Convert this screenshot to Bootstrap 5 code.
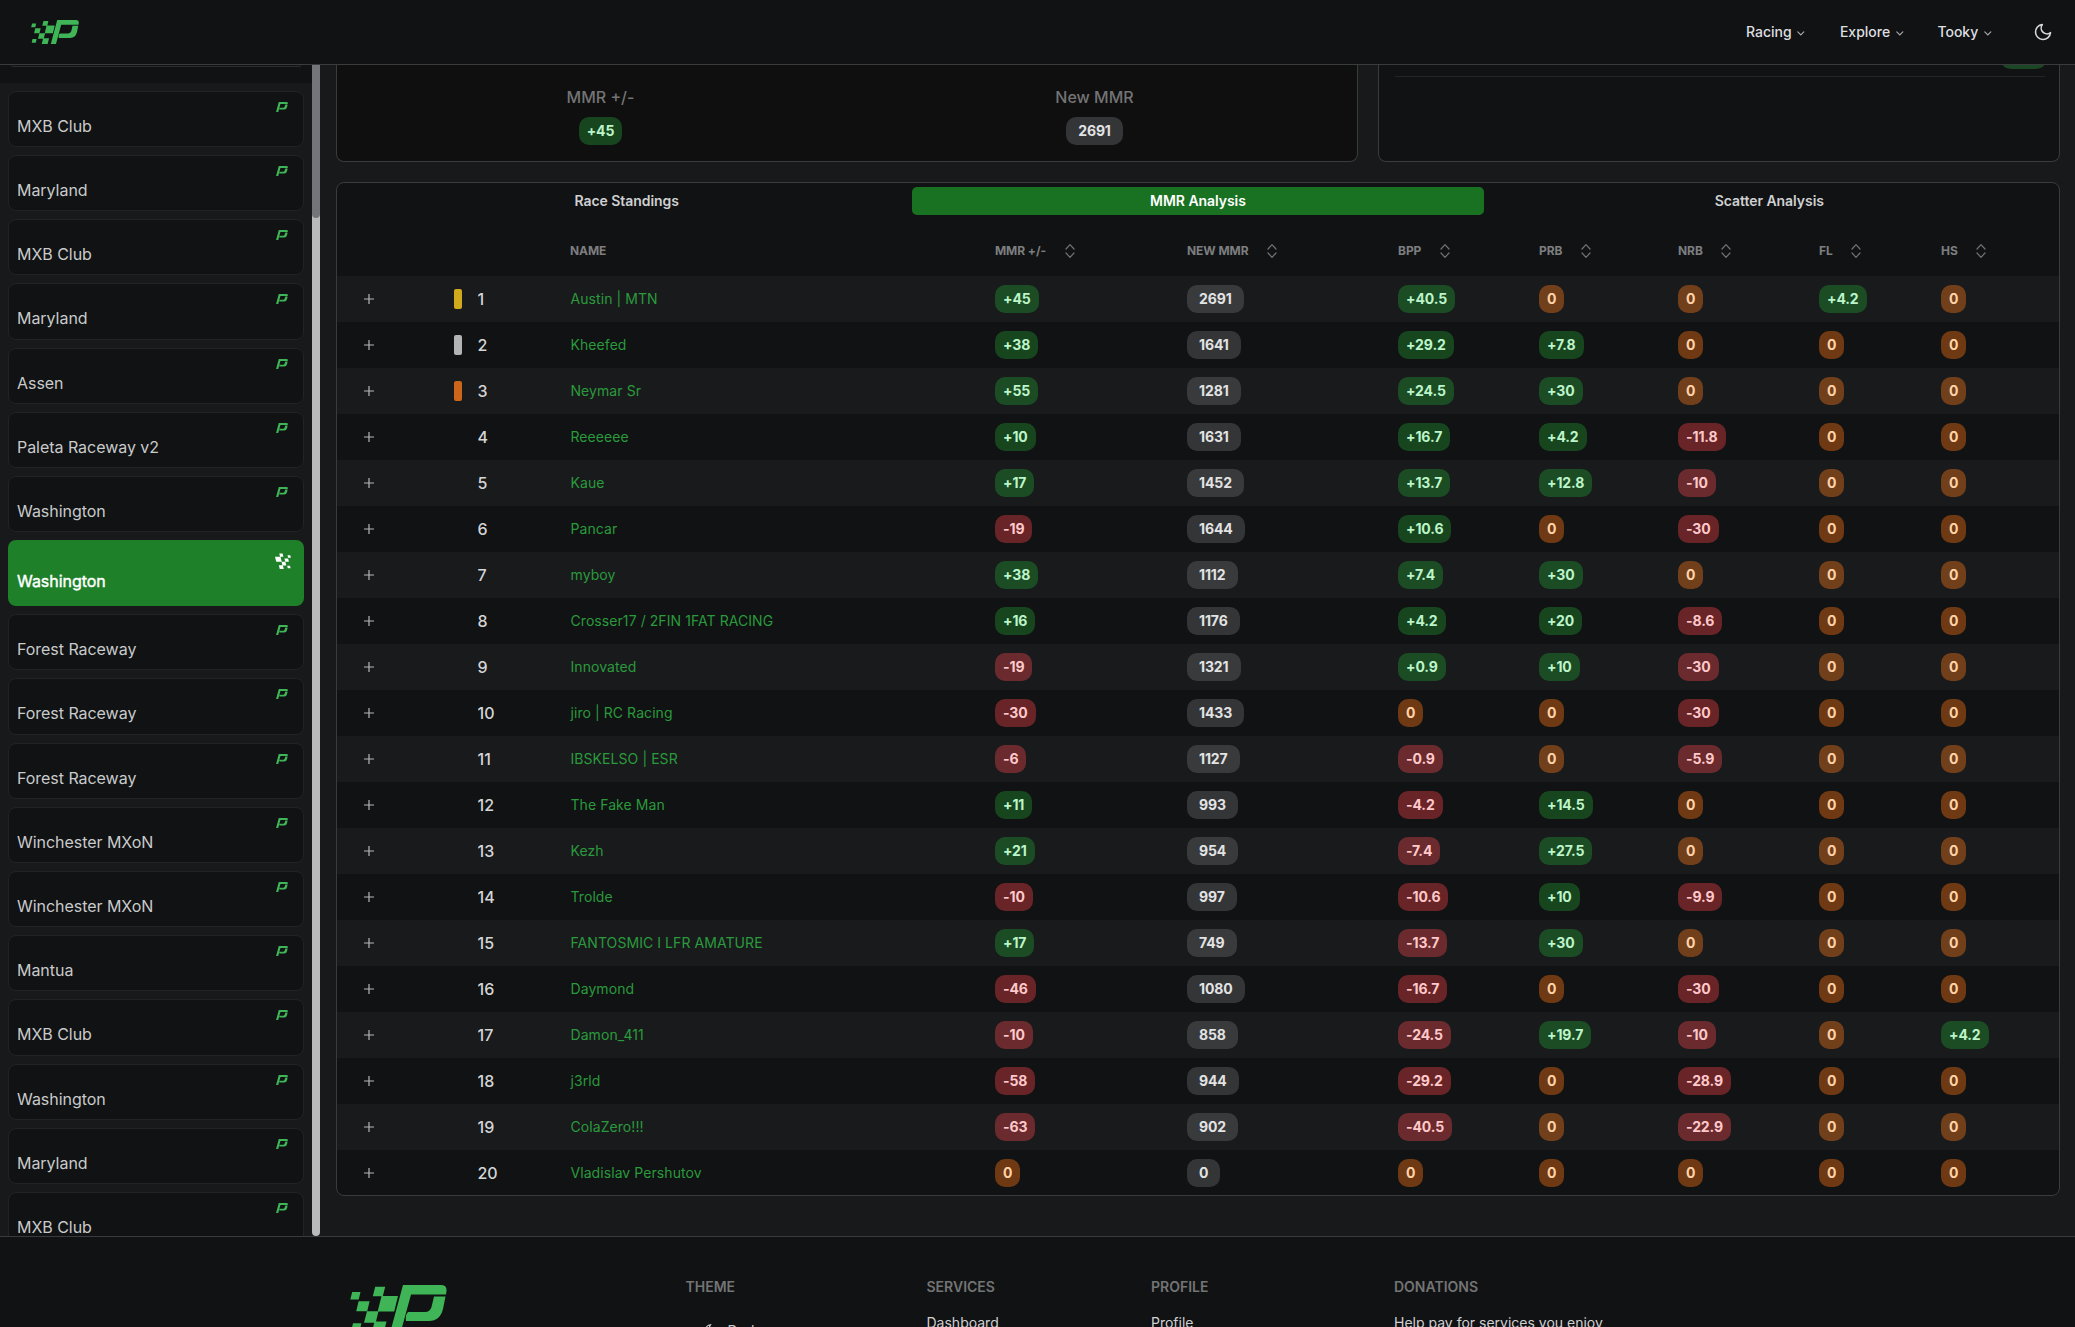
<!DOCTYPE html>
<html lang="en" data-bs-theme="dark">
<head>
<meta charset="utf-8">
<title>MMR Analysis</title>
<link rel="stylesheet" href="https://cdn.jsdelivr.net/npm/bootstrap@5.3.0/dist/css/bootstrap.min.css">
<style>
html,body{height:1327px;overflow:hidden}
body{font-family:Inter,sans-serif;background:#18191b;color:#c9cacb;font-size:14px;line-height:20px}
.topbar{height:65px;background:#111213;border-bottom:1px solid #3a3b3d;padding:0 22px 0 31px}
.topbar .nav-link{color:#dedfe0;font-weight:500;padding:0}
.topbar .nav-link svg{margin-left:2px}
.panel{background:#101213;border:1px solid #393b3d;border-radius:8px}
.green{color:#3fb557}
.shell{height:1171px}
.side{width:320px}
.side-list{width:312px;overflow:hidden}
.side-head{height:17.9px;background:#111214;padding:0 8px;flex:none}
.side-head div{height:2px;border:1px solid #2b2c2f;border-top:0;border-radius:0 0 8px 8px;margin:0 3px}
.track{height:56.2px;flex:none;background:#101213;border:1px solid #212325;border-radius:8px;position:relative;padding:22px 8px 0;font-size:16px;line-height:24px;letter-spacing:-.04px;color:#c9cacb}
.track svg{position:absolute;right:15px;top:10px}
.track.now{height:66px;background:#1e8129;border:0;color:#fff;-webkit-text-stroke:.4px #fff;padding:29px 9px 0}
.track.now svg{right:13px;top:13px}
.rail{width:8px;background:#b9babc;border-radius:0 0 4px 4px}
.rail div{height:153px;background:#74757a;border-radius:0 0 4px 4px}
.content{padding:0 15px 0 16px}
.summary{height:97px;border-top:0;border-radius:0 0 8px 8px}
.stat{margin-top:-4px;padding-left:1px}
.stat .pill{margin-top:8px}
.stat-title{font-size:16px;line-height:24px;color:#737475;font-weight:500}
.pill{display:inline-block;height:28px;line-height:28px;border-radius:10px;padding:0 8px;font-weight:700;font-size:14px;letter-spacing:-.1px;vertical-align:middle}
.pos{background:#17451e;color:#bdf5ca}
.neg{background:#692427;color:#ffc9cb}
.zer{background:#6f3913;color:#ffd3a8}
.neu{background:#343536;color:#e2e3e4;padding:0 12px}
tr:nth-child(odd) .pos{background:#1b4c24}
tr:nth-child(odd) .neg{background:#6b2b2e}
tr:nth-child(odd) .zer{background:#723f1b}
tr:nth-child(odd) .neu{background:#393a3b}
.board{height:1014px;overflow:hidden;margin-top:20px}
.tabs{padding:4px}
.tabs .nav-link{height:28px;padding:0;line-height:28px;color:#cfd0d1;font-weight:600;letter-spacing:-.05px;border-radius:5px;font-size:14px}
.tabs .nav-link.active{background:#197221;color:#fff}
.grid-t{table-layout:fixed;width:100%;border-collapse:collapse}
.grid-t th{height:57px;padding:6px 0 0;color:#7d7e80;font-size:12px;font-weight:700;letter-spacing:-.06px}
.grid-t th svg{margin-left:15.5px}
.grid-t td{height:46px;padding:0;vertical-align:middle}
.grid-t td>svg{position:relative;top:-1px}
.grid-t tbody tr:nth-child(odd){background:#191a1c}
.grid-t .who{color:#2a9a3c;letter-spacing:.07px;padding-left:.5px}
.place{font-size:16px;font-weight:500;color:#d4d5d6}
.medal{width:8px;height:20px;border-radius:2px;margin-right:15.5px}
.foot{background:#111213;border-top:1px solid #3a3b3d;height:91px;padding:40px 0 0 350px;overflow:hidden}
.foot h6{font-size:14px;line-height:20px;font-weight:600;color:#737475;margin:0 0 16px}
.foot a{color:#d0d1d2;text-decoration:none;white-space:nowrap;display:block}
</style>
<script src="https://cdn.jsdelivr.net/npm/bootstrap@5.3.0/dist/js/bootstrap.bundle.min.js"></script>
</head>
<body>
<svg width="0" height="0" class="position-absolute">
<defs>
<g id="checks"><path d="M2.200 7h8.300l-1.800 7.600h-8.400zM25.200 1.700h10l-2.400 9.500h-10zM8.600 16.300h11l-2.400 10h-11zM31.500 11h16.500l-3.800 15.500h-16.500zM17 26.300h11.500l-2.800 11.400h-11.700zM3 38.200h8.400l-1.700 7.300h-8.300zM24.500 36.500h12l-2.800 11.500h-12z"/></g>
<g id="pee"><path d="M53 0H91Q97 0 96.500 6L96 9.500H61L50.500 48H40ZM84 11.500H95.500L93 24Q90 36 79 36H56Q55 30 58 27H75Q80 27 81.500 22Z"/></g>
<g id="chev"><path d="M.8.800l3 3 3-3" fill="none" stroke="#a5a6a8" stroke-width="1.2" stroke-linecap="round"/></g>
<g id="sort"><path d="M4 6l4-4.300 4 4.300M4 10l4 4.300 4-4.300" fill="none" stroke="#717274" stroke-width="1.2" stroke-linecap="round" stroke-linejoin="round"/></g>
<g id="plus"><path d="M8 3v10M3 8h10" stroke="#b5b6b7" stroke-width="1.200"/></g>
</defs>
</svg>
<nav class="topbar d-flex align-items-center justify-content-between">
  <svg class="green" width="48" height="24" viewBox="0 0 97 48" fill="currentColor"><use href="#checks"/><use href="#pee"/></svg>
  <div class="d-flex align-items-center">
    <a class="nav-link" href="#">Racing <svg width="8" height="5"><use href="#chev"/></svg></a>
    <a class="nav-link" href="#" style="margin-left:34.500px">Explore <svg width="8" height="5"><use href="#chev"/></svg></a>
    <a class="nav-link" href="#" style="margin-left:33.500px">Tooky <svg width="8" height="5"><use href="#chev"/></svg></a>
    <svg style="margin-left:41px" width="20" height="20" viewBox="0 0 24 24" fill="none" stroke="#d8d9da" stroke-width="1.900" stroke-linejoin="round"><path d="M21 12.800A9 9 0 1 1 11.200 3a7 7 0 0 0 9.800 9.800z"/></svg>
  </div>
</nav>
<div class="shell d-flex">
  <aside class="side d-flex">
    <div class="side-list">
      <div class="side-head"><div></div></div>
      <div class="d-flex flex-column gap-2 px-2 pt-2" id="tracks"></div>
    </div>
    <div class="rail"><div></div></div>
  </aside>
  <main class="content flex-grow-1">
    <div class="d-flex" style="gap:20px">
      <div class="panel summary d-flex px-3 pt-4" style="width:1022px;background:#0f0f0f">
        <div class="col-6 text-center stat"><div class="stat-title">MMR +/-</div><span class="pill pos">+45</span></div>
        <div class="col-6 text-center stat"><div class="stat-title">New MMR</div><span class="pill neu">2691</span></div>
      </div>
      <div class="panel summary flex-grow-1 px-3">
        <div class="d-flex justify-content-end" style="height:12px;border-bottom:1px solid #222426;padding-right:1px;margin-right:-2px"><div style="width:41px;height:4px;background:#1c4725;border-radius:0 0 10px 10px/0 0 4px 4px"></div></div>
      </div>
    </div>
    <section class="panel board">
      <ul class="nav nav-pills nav-fill tabs">
        <li class="nav-item col-4"><a class="nav-link" href="#">Race Standings</a></li>
        <li class="nav-item col-4"><a class="nav-link active" href="#">MMR Analysis</a></li>
        <li class="nav-item col-4"><a class="nav-link" href="#">Scatter Analysis</a></li>
      </ul>
      <table class="grid-t">
        <colgroup><col style="width:117px"><col style="width:116px"><col style="width:425px"><col style="width:192px"><col style="width:211px"><col style="width:141px"><col style="width:139px"><col style="width:141px"><col style="width:122px"><col></colgroup>
        <thead><tr id="heads"></tr></thead>
        <tbody id="rows"></tbody>
      </table>
    </section>
  </main>
</div>
<footer class="foot d-flex align-items-start">
  <svg class="green flex-shrink-0" style="margin-top:8px" width="97" height="48" viewBox="0 0 97 48" fill="currentColor"><use href="#checks"/><use href="#pee"/></svg>
  <div class="flex-shrink-0" style="width:241px;margin-left:238.500px"><h6>THEME</h6><div class="d-flex" style="padding:10px 0 0 18px"><svg width="14" height="14" viewBox="0 0 24 24" fill="none" stroke="#d8d9da" stroke-width="2"><path d="M21 12.800A9 9 0 1 1 11.200 3a7 7 0 0 0 9.800 9.800z"/></svg><span style="margin-left:10px;line-height:16px">Dark</span></div></div>
  <div class="flex-shrink-0" style="width:224.500px"><h6>SERVICES</h6><a href="#">Dashboard</a></div>
  <div class="flex-shrink-0" style="width:243px"><h6>PROFILE</h6><a href="#">Profile</a></div>
  <div class="flex-shrink-0"><h6>DONATIONS</h6><a href="#">Help pay for services you enjoy</a></div>
</footer>
<script>
const tracks=['MXB Club','Maryland','MXB Club','Maryland','Assen','Paleta Raceway v2','Washington','*Washington','Forest Raceway','Forest Raceway','Forest Raceway','Winchester MXoN','Winchester MXoN','Mantua','MXB Club','Washington','Maryland','MXB Club'];
document.getElementById('tracks').innerHTML=tracks.map(t=>t[0]==='*'
 ?`<div class="track now"><svg width="16" height="16" viewBox="0 0 48 48" fill="#fff"><use href="#checks" transform="translate(48 0) scale(-1 1)"/></svg>${t.slice(1)}</div>`
 :`<div class="track"><svg class="green" width="12" height="10" viewBox="40 0 57 48" fill="currentColor"><use href="#pee"/></svg>${t}</div>`).join('');
document.getElementById('heads').innerHTML=['','','NAME','MMR +/-','NEW MMR','BPP','PRB','NRB','FL','HS'].map((h,i)=>
 `<th>${h}${i>2?'<svg width="16" height="16"><use href="#sort"/></svg>':''}</th>`).join('');
const data=`Austin | MTN;+45;2691;+40.5;0;0;+4.2;0
Kheefed;+38;1641;+29.2;+7.8;0;0;0
Neymar Sr;+55;1281;+24.5;+30;0;0;0
Reeeeee;+10;1631;+16.7;+4.2;-11.8;0;0
Kaue;+17;1452;+13.7;+12.8;-10;0;0
Pancar;-19;1644;+10.6;0;-30;0;0
myboy;+38;1112;+7.4;+30;0;0;0
Crosser17 / 2FIN 1FAT RACING;+16;1176;+4.2;+20;-8.6;0;0
Innovated;-19;1321;+0.9;+10;-30;0;0
jiro | RC Racing;-30;1433;0;0;-30;0;0
IBSKELSO | ESR;-6;1127;-0.9;0;-5.9;0;0
The Fake Man;+11;993;-4.2;+14.5;0;0;0
Kezh;+21;954;-7.4;+27.5;0;0;0
Trolde;-10;997;-10.6;+10;-9.9;0;0
FANTOSMIC I LFR AMATURE;+17;749;-13.7;+30;0;0;0
Daymond;-46;1080;-16.7;0;-30;0;0
Damon_411;-10;858;-24.5;+19.7;-10;0;+4.2
j3rld;-58;944;-29.2;0;-28.9;0;0
ColaZero!!!;-63;902;-40.5;0;-22.9;0;0
Vladislav Pershutov;0;0;0;0;0;0;0`;
const medals=['#d0aa1c','#b3b4b5','#cc661b'];
document.getElementById('rows').innerHTML=data.split('\n').map((l,r)=>{
 const [name,...v]=l.split(';');
 return `<tr><td style="padding-left:24px"><svg width="16" height="16"><use href="#plus"/></svg></td><td><div class="d-flex align-items-center"><span class="medal" style="background:${medals[r]||'transparent'}"></span><span class="place">${r+1}</span></div></td><td class="who">${name}</td>`+
 v.map((x,i)=>`<td><span class="pill ${i===1?'neu':x[0]==='+'?'pos':x[0]==='-'?'neg':'zer'}">${x}</span></td>`).join('')+'</tr>';
}).join('');
</script>
</body>
</html>
